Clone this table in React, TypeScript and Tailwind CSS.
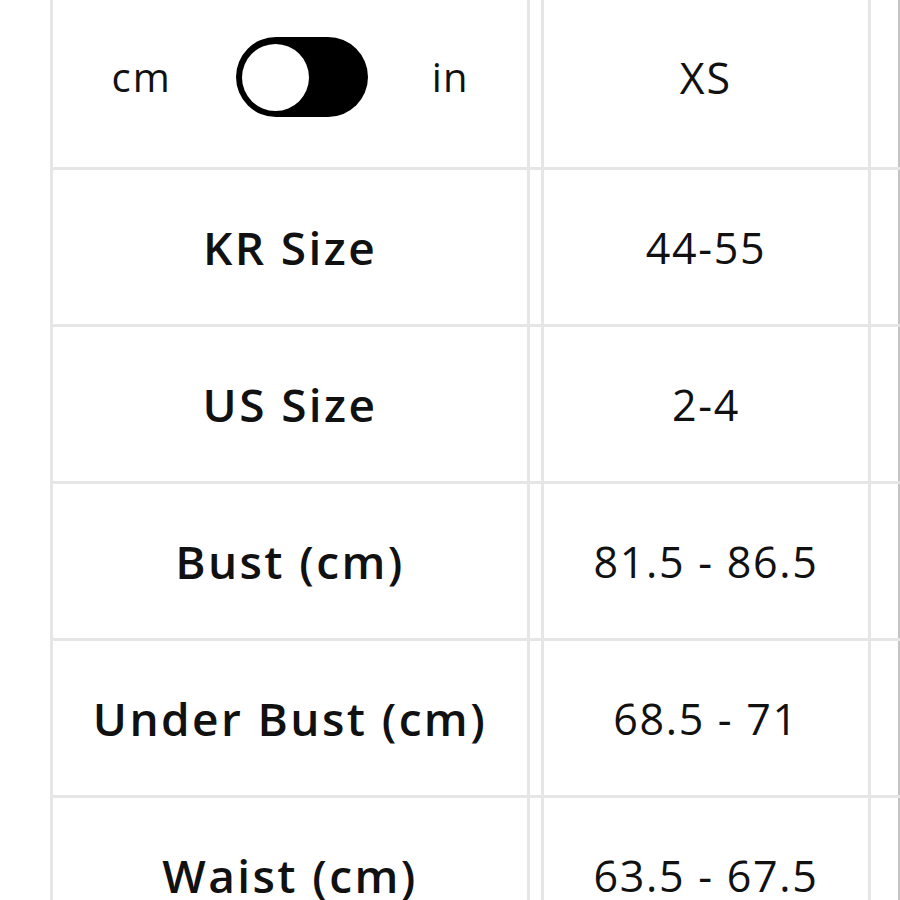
import React from "react";

const rows = [
  { label: "KR Size", value: "44-55" },
  { label: "US Size", value: "2-4" },
  { label: "Bust (cm)", value: "81.5 - 86.5" },
  { label: "Under Bust (cm)", value: "68.5 - 71" },
  { label: "Waist (cm)", value: "63.5 - 67.5" },
];

function Row({ left, right, first }: { left: React.ReactNode; right: React.ReactNode; first?: boolean }) {
  return (
    <div className={`flex border-b-[3px] border-[#e6e6e6] ${first ? "h-[171px]" : "h-[157px]"}`}>
      <div className="w-[480px] shrink-0 border-x-[3px] border-[#e6e6e6] flex items-center justify-center">
        {left}
      </div>
      <div className="w-[11px] shrink-0" />
      <div className="w-[330px] shrink-0 border-x-[3px] border-[#e6e6e6] flex items-center justify-center">
        {right}
      </div>
      <div className="flex-1 border-r-[2px] border-[#c4c4c4]" />
    </div>
  );
}

export default function App() {
  return (
    <div
      className="h-[900px] w-[900px] overflow-hidden bg-white text-[#111]"
      style={{ fontFamily: '"Open Sans", "Liberation Sans", sans-serif' }}
    >
      <div className="ml-[50px] -mt-[1px]">
        <Row
          first
          left={
            <div className="flex items-center gap-[64px] pb-[12px]">
              <span className="text-[40px] leading-none tracking-[2px]">cm</span>
              <div className="w-[132px] h-[80px] rounded-full bg-black flex items-center pl-[6px]">
                <div className="w-[67px] h-[67px] rounded-full bg-white" />
              </div>
              <span className="text-[40px] leading-none tracking-[1px]">in</span>
            </div>
          }
          right={<span className="text-[43px] leading-none pb-[12px] tracking-[2px]">XS</span>}
        />
        {rows.map((r) => (
          <Row
            key={r.label}
            left={<span className="text-[46px] font-semibold leading-none tracking-[2.4px]">{r.label}</span>}
            right={<span className="text-[43px] leading-none tracking-[1.7px]">{r.value}</span>}
          />
        ))}
      </div>
    </div>
  );
}
